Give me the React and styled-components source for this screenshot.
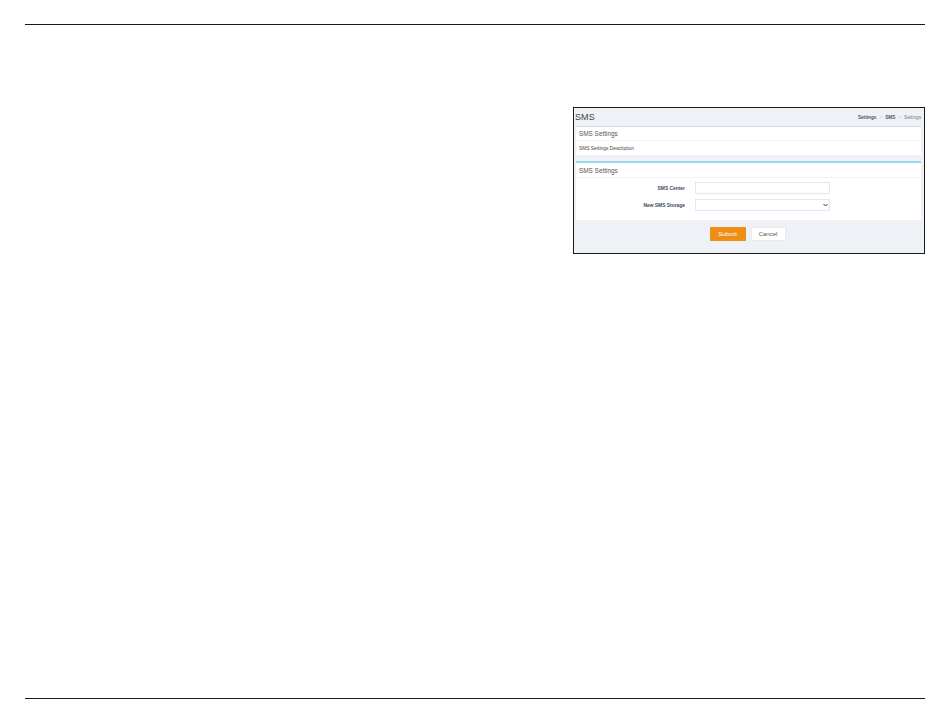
import styled, { createGlobalStyle } from 'styled-components';

const GlobalStyle = createGlobalStyle`
  html, body {
    margin: 0;
    padding: 0;
    background: #fff;
  }
  * {
    box-sizing: border-box;
  }
`;

const Page = styled.main`
  display: flex;
  flex-direction: column;
  width: 900px;
  height: 675px;
  margin: 24px 0 0 25px;
  padding-top: 82px;
  border-top: 1px solid #1a1a1a;
  border-bottom: 1px solid #1a1a1a;
`;

const Shot = styled.section`
  align-self: flex-end;
  width: 352px;
  height: 147px;
  padding-right: 3px;
  background: #eef1f6;
  border: 1px solid #1a1a1a;
  font-family: 'Liberation Sans', Arial, sans-serif;
  color: #555;
`;

const Header = styled.header`
  display: flex;
  align-items: center;
  justify-content: space-between;
  height: 18px;
  padding: 0 0 0 1px;
`;

const Title = styled.h1`
  margin: 0;
  font-size: 9px;
  font-weight: 400;
  letter-spacing: 0.1px;
  color: #444;
`;

const Crumbs = styled.nav`
  display: flex;
  gap: 3px;
  padding-top: 1px;
  font-size: 4.7px;
  font-weight: 700;
  color: #4a5568;
`;

const Crumb = styled.span`
  font-weight: ${(p) => (p.$muted || p.$last ? 400 : 700)};
  color: ${(p) => (p.$muted ? '#c3c9d1' : p.$last ? '#6f7c8a' : '#4a5568')};
`;

const Card = styled.div`
  margin-left: 2px;
  background: #fff;
  border-top: ${(p) => (p.$accent ? '2px solid #98d5f0' : '1px solid #d5dbe3')};
`;

const CardTitle = styled.h2`
  display: flex;
  align-items: center;
  height: ${(p) => (p.$accent ? '15px' : '14px')};
  margin: 0;
  padding-left: 3px;
  font-size: 6.4px;
  font-weight: 400;
  color: #555;
  border-bottom: 1px solid #f3f4f6;
`;

const Description = styled.p`
  display: flex;
  align-items: center;
  height: 14px;
  margin: 0 0 6px;
  padding-left: 3px;
  font-size: 4.85px;
  color: #444;
`;

const Form = styled.form`
  display: flex;
  flex-direction: column;
  gap: 5px;
  padding: 4px 0 9px;
`;

const Field = styled.div`
  display: grid;
  grid-template-columns: 109px 135px;
  column-gap: 10px;
  align-items: center;
`;

const Label = styled.label`
  font-size: 4.9px;
  font-weight: 700;
  text-align: right;
  color: #3c4a5e;
`;

const TextInput = styled.input`
  height: 12px;
  padding: 0;
  background: #fff;
  border: 1px solid #e5e6ef;
  outline: none;
`;

const SelectWrap = styled.div`
  position: relative;
  height: 12px;
`;

const SelectBox = styled.select`
  display: block;
  width: 100%;
  height: 12px;
  padding: 0;
  font-size: 5px;
  background: #fff;
  border: 1px solid #e5e6ef;
  outline: none;
  appearance: none;
`;

const Chevron = styled.svg`
  position: absolute;
  top: 4px;
  right: 2px;
  width: 5px;
  height: 4px;
  pointer-events: none;
`;

const Actions = styled.div`
  display: flex;
  justify-content: center;
  gap: 5px;
  padding-top: 7px;
`;

const Button = styled.button`
  width: ${(p) => (p.$primary ? '36px' : '35px')};
  height: 14px;
  padding: 0;
  font-family: inherit;
  font-size: 6px;
  color: ${(p) => (p.$primary ? '#fff' : '#555')};
  background: ${(p) => (p.$primary ? '#ec8f14' : '#fff')};
  border: 1px solid ${(p) => (p.$primary ? '#ec8f14' : '#e7eaee')};
`;

export default function App() {
  return (
    <>
      <GlobalStyle />
      <Page>
        <Shot>
          <Header>
            <Title>SMS</Title>
            <Crumbs>
              <Crumb>Settings</Crumb>
              <Crumb $muted>&gt;</Crumb>
              <Crumb>SMS</Crumb>
              <Crumb $muted>&gt;</Crumb>
              <Crumb $last>Settings</Crumb>
            </Crumbs>
          </Header>
          <Card>
            <CardTitle>SMS Settings</CardTitle>
            <Description>SMS Settings Description</Description>
          </Card>
          <Card $accent>
            <CardTitle $accent>SMS Settings</CardTitle>
            <Form>
              <Field>
                <Label htmlFor="center">SMS Center</Label>
                <TextInput id="center" type="text" />
              </Field>
              <Field>
                <Label htmlFor="storage">New SMS Storage</Label>
                <SelectWrap>
                  <SelectBox id="storage" />
                  <Chevron viewBox="0 0 10 8">
                    <path d="M1 2l4 4 4-4" fill="none" stroke="#333" strokeWidth="2" />
                  </Chevron>
                </SelectWrap>
              </Field>
            </Form>
          </Card>
          <Actions>
            <Button type="button" $primary>Submit</Button>
            <Button type="button">Cancel</Button>
          </Actions>
        </Shot>
      </Page>
    </>
  );
}
